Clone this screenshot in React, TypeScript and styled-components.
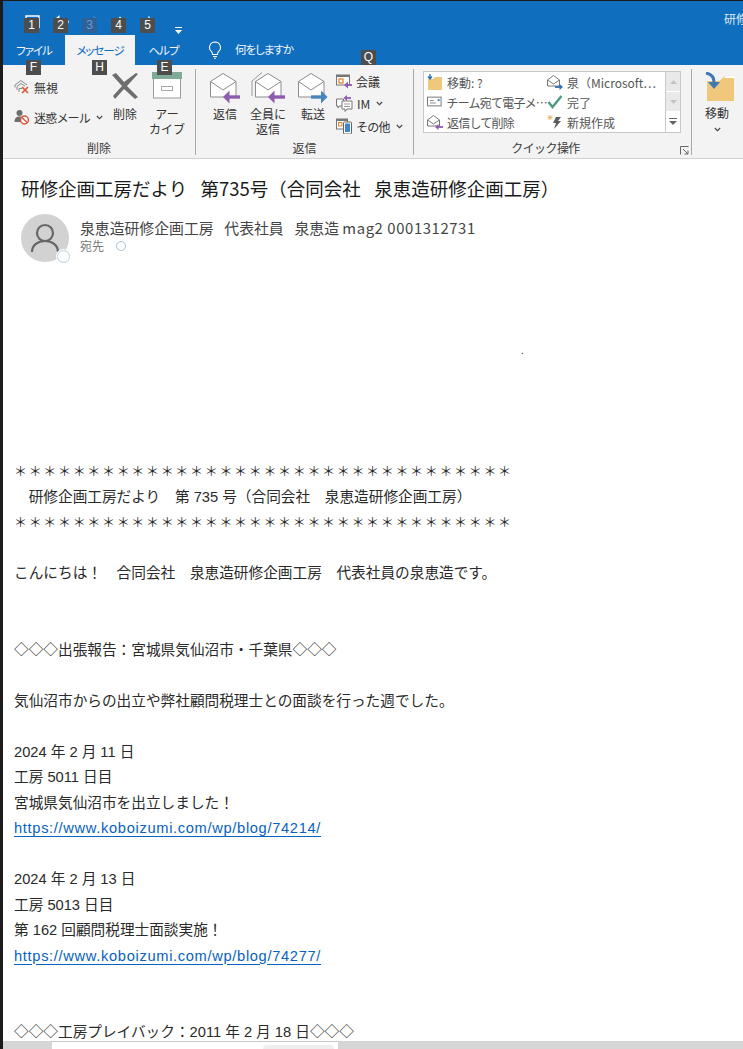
import React from 'react';
import styled, { createGlobalStyle } from 'styled-components';

const GlobalStyle = createGlobalStyle`
  html, body {
    margin: 0;
    padding: 0;
    background: #1c1c1c;
  }
  * {
    box-sizing: border-box;
  }
`;

const uiFont = `"Noto Sans CJK JP", "Noto Sans", sans-serif`;
const bodyFont = `"Liberation Sans", "Noto Sans CJK JP", sans-serif`;

const Window = styled.div`
  width: 740px;
  height: 1048px;
  margin: 1px 0 0 3px;
  display: flex;
  flex-direction: column;
  overflow: hidden;
  background: #fff;
  font-family: ${uiFont};
`;
const TitleBar = styled.div`
  height: 34px;
  flex: none;
  display: flex;
  background: #106ebe;
  padding-left: 19px;
`;
const QatItem = styled.div`
  width: 29px;
  height: 34px;
  position: relative;
  padding: 9px 0 0 3px;
`;
const KeyTip = styled.span<{ left: number; top: number; dim?: boolean }>`
  position: absolute;
  left: ${(p) => p.left}px;
  top: ${(p) => p.top}px;
  width: 15px;
  height: 15px;
  display: flex;
  align-items: center;
  justify-content: center;
  font-size: 12px;
  letter-spacing: 0;
  line-height: 15px;
  font-family: "Liberation Sans", sans-serif;
  color: ${(p) => (p.dim ? '#6f9bc9' : '#fff')};
  background: ${(p) => (p.dim ? '#2c6298' : '#4d4d4d')};
  z-index: 2;
`;
const Customize = styled.div`
  margin: 14px 0 0 8px;
  width: 7px;
`;
const WindowTitle = styled.div`
  margin-left: auto;
  width: 19px;
  padding-top: 9px;
  overflow: hidden;
  white-space: nowrap;
  color: #dce9f5;
  font-size: 12px;
  line-height: 17px;
`;
const TabBar = styled.div`
  height: 30px;
  flex: none;
  display: flex;
  background: #106ebe;
`;
const Tab = styled.div<{ active?: boolean; w: number }>`
  position: relative;
  width: ${(p) => p.w}px;
  display: flex;
  justify-content: center;
  padding-top: 6px;
  font-size: 11.5px;
  letter-spacing: -1px;
  line-height: 18px;
  font-feature-settings: 'palt';
  color: ${(p) => (p.active ? '#106ebe' : '#f2f7fc')};
  background: ${(p) => (p.active ? '#f3f3f3' : 'transparent')};
`;
const TellMe = styled.div`
  position: relative;
  margin-left: 16px;
  display: flex;
  gap: 13px;
  padding-top: 5px;
  font-size: 11.5px;
  letter-spacing: -1px;
  line-height: 19px;
  font-feature-settings: 'palt';
  color: #f2f7fc;
`;
const Ribbon = styled.div`
  height: 94px;
  flex: none;
  display: flex;
  padding: 4px 0 3px;
  background: #f3f3f3;
  border-bottom: 1px solid #d2d2d2;
`;
const Group = styled.div<{ w: number }>`
  position: relative;
  width: ${(p) => p.w}px;
  flex: none;
  display: flex;
  flex-direction: column;
  border-right: 1px solid #a9a9a9;
  &:last-child {
    border-right: none;
  }
`;
const GroupBody = styled.div<{ pad?: number }>`
  height: 72px;
  flex: none;
  display: flex;
  padding-left: ${(p) => p.pad ?? 0}px;
`;
const GroupLabel = styled.div<{ shift?: number; tight?: boolean }>`
  height: 13px;
  text-align: center;
  font-size: 12px;
  letter-spacing: ${(p) => (p.tight ? '-0.6px' : '0')};
  line-height: 13px;
  color: #3b3b3b;
  padding-right: ${(p) => p.shift ?? 0}px;
`;
const SmallColumn = styled.div<{ w: number; top: number; gap: number; rowH: number }>`
  width: ${(p) => p.w}px;
  flex: none;
  display: grid;
  grid-auto-rows: ${(p) => p.rowH}px;
  row-gap: ${(p) => p.gap}px;
  align-content: start;
  padding-top: ${(p) => p.top}px;
`;
const SmallButton = styled.div`
  display: flex;
  align-items: center;
  gap: 4px;
  font-size: 12px;
  color: #333;
  white-space: nowrap;
`;
const Kana = styled.span`
  letter-spacing: -0.8px;
`;
const Chevron = styled.span`
  display: inline-flex;
  margin-left: 2px;
`;
const LargeButton = styled.div<{ w: number; after?: number }>`
  width: ${(p) => p.w}px;
  flex: none;
  margin-right: ${(p) => p.after ?? 0}px;
  display: flex;
  flex-direction: column;
  align-items: center;
  font-size: 12px;
  line-height: 15px;
  color: #333;
  text-align: center;
  white-space: nowrap;
`;
const LargeIcon = styled.div`
  height: 35px;
  margin-bottom: 2px;
  padding-top: 3px;
`;
const Gallery = styled.div`
  margin: 2px 0 0 9px;
  width: 258px;
  height: 62px;
  display: flex;
  background: #fff;
  border: 1px solid #c8c8c8;
`;
const GalleryGrid = styled.div`
  flex: 1;
  display: grid;
  grid-template-columns: 120px 1fr;
  grid-auto-rows: 20px;
  padding: 0 0 0 3px;
`;
const GalleryItem = styled.div`
  display: flex;
  align-items: center;
  gap: 4px;
  font-size: 12px;
  color: #555;
  white-space: nowrap;
  overflow: hidden;
`;
const GalleryScroll = styled.div`
  width: 15px;
  flex: none;
  display: flex;
  flex-direction: column;
  border-left: 1px solid #c8c8c8;
`;
const ScrollCell = styled.div<{ white?: boolean }>`
  flex: 1;
  display: flex;
  align-items: center;
  justify-content: center;
  background: ${(p) => (p.white ? '#fff' : '#e9e9e9')};
  border-bottom: 1px solid #fff;
`;
const Launcher = styled.div`
  position: absolute;
  right: 2px;
  bottom: 0;
  width: 9px;
  height: 9px;
  display: flex;
`;
const MoveLabel = styled.div`
  font-size: 12px;
  line-height: 14px;
  margin-bottom: 7px;
  color: #333;
`;
const MailHeader = styled.div`
  flex: none;
  height: 116px;
  padding: 16px 0 0 18px;
`;
const Subject = styled.div`
  font-size: 18.5px;
  line-height: 26px;
  color: #1a1a1a;
  white-space: pre;
`;
const SenderRow = styled.div`
  display: flex;
  gap: 11px;
  margin-top: 13px;
`;
const Avatar = styled.div`
  position: relative;
  width: 48px;
  height: 48px;
  border-radius: 50%;
  background: #d2d2d2;
  display: flex;
  align-items: center;
  justify-content: center;
`;
const Presence = styled.span`
  position: absolute;
  right: -1px;
  bottom: -1px;
  width: 13px;
  height: 13px;
  border-radius: 50%;
  background: #fff;
  border: 1.5px solid #bcd0dc;
  box-shadow: 0 0 0 1px #fff;
`;
const SenderName = styled.div`
  font-size: 14.85px;
  line-height: 18px;
  margin-top: 5px;
  color: #444;
  white-space: pre;
`;
const Digits = styled.span`
  letter-spacing: 0.6px;
`;
const ToLine = styled.div`
  display: flex;
  align-items: center;
  gap: 12px;
  font-size: 12px;
  line-height: 17px;
  color: #777;
`;
const ToPresence = styled.span`
  width: 10px;
  height: 10px;
  border-radius: 50%;
  border: 1.5px solid #a9c4d6;
`;
const MailBody = styled.div`
  flex: 1;
  min-height: 0;
  overflow: hidden;
  padding-left: 11px;
  font-family: ${bodyFont};
  font-size: 14.67px;
  line-height: 25.5px;
  color: #2a2a2a;
`;
const Preheader = styled.div`
  height: 184px;
  padding: 69px 0 0 507px;
  font-size: 10px;
  line-height: 14px;
`;
const Line = styled.div`
  min-height: 25.5px;
  white-space: pre;
`;
const StarLine = styled.div`
  height: 25.5px;
  font-size: 13px;
  letter-spacing: 1.67px;
  white-space: pre;
`;
const Link = styled.a`
  color: #0563c1;
  letter-spacing: 0.67px;
  text-decoration: underline;
  text-underline-offset: 3px;
`;
const BottomBar = styled.div`
  height: 8px;
  flex: none;
  display: flex;
  background: #d6d6d6;
  padding-left: 49px;
`;
const BottomPanel = styled.div`
  width: 286px;
  background: #fff;
  border-top: 1px solid #c8c8c8;
  display: flex;
  justify-content: flex-end;
  padding: 3px 4px 0 0;
`;
const BottomHandle = styled.div`
  width: 71px;
  background: #eee;
  border-radius: 4px 4px 0 0;
`;

const ChevronDown = () => (
  <svg width="7" height="5" viewBox="0 0 7 5">
    <path d="M.8 1l2.7 2.7L6.2 1" fill="none" stroke="#444" strokeWidth="1.1" />
  </svg>
);

const Arrow = ({ color, right }: { color: string; right?: boolean }) =>
  right ? (
    <>
      <path d="M13 25h11" stroke={color} strokeWidth="3.4" />
      <path d="M23 18.5l6.5 6.5-6.5 6.5z" fill={color} />
    </>
  ) : (
    <>
      <path d="M18 25h12" stroke={color} strokeWidth="3.4" />
      <path d="M19.5 18.5L13 25l6.5 6.5z" fill={color} />
    </>
  );

const EnvelopeLarge = ({ color, right, all }: { color: string; right?: boolean; all?: boolean }) => (
  <svg width={all ? 34 : 30} height="32" viewBox={all ? '-4 0 34 32' : '0 0 30 32'}>
    {all && <path d="M-3 24V9L7 .5" fill="none" stroke="#9a9a9a" />}
    <path d="M.5 9.5L13 1.5l13 8V25H.5z" fill="#fff" stroke="#8c8c8c" />
    <path d="M.5 9.5L13 18l13-8.5" fill="none" stroke="#8c8c8c" />
    <Arrow color={color} right={right} />
  </svg>
);

const IgnoreIcon = () => (
  <svg width="16" height="16" viewBox="0 0 16 16">
    <path d="M1 8.5V6l6-4.5L13 6" fill="none" stroke="#888" />
    <path d="M3 11V7.5L7 4.5l4 2.5" fill="none" stroke="#888" />
    <path d="M5 13V9.500h3" fill="none" stroke="#888" />
    <path d="M8 8l6 6m0-6l-6 6" stroke="#d9583b" strokeWidth="1.7" />
  </svg>
);
const JunkIcon = () => (
  <svg width="16" height="16" viewBox="0 0 16 16">
    <circle cx="5.500" cy="4" r="3" fill="#6e6e6e" />
    <path d="M.5 13c0-4 2-5.500 5-5.500 2 0 3 .5 3.500 1.500L7 13z" fill="#6e6e6e" />
    <circle cx="10.500" cy="11" r="3.900" fill="#fff" stroke="#d9583b" strokeWidth="1.500" />
    <path d="M8 8.500l5 5" stroke="#d9583b" strokeWidth="1.500" />
  </svg>
);
const MeetingIcon = () => (
  <svg width="16" height="16" viewBox="0 0 16 16">
    <rect x=".5" y="2" width="13" height="10" fill="#fff" stroke="#777" />
    <path d="M1 2h12v2H1z" fill="#777" />
    <rect x="3" y="6" width="4" height="4" fill="#fff" stroke="#e5892e" strokeWidth="1.300" />
    <path d="M16 12H10" stroke="#8e5bb0" strokeWidth="1.800" />
    <path d="M12 8.500L8 12l4 3.500z" fill="#8e5bb0" />
  </svg>
);
const ImIcon = () => (
  <svg width="17" height="17" viewBox="0 0 17 17">
    <path d="M.5 4h7v7H3l-1 2v-2H.5z" fill="#fff" stroke="#777" />
    <path d="M6 6h10v8h-5l-2 2.500V14H6z" fill="#fff" stroke="#777" />
    <path d="M8 9h6M8 11.500h6" stroke="#999" />
    <path d="M15 3H9" stroke="#8e5bb0" strokeWidth="1.800" />
    <path d="M11 0L7.500 3 11 6z" fill="#8e5bb0" />
  </svg>
);
const MoreIcon = () => (
  <svg width="16" height="16" viewBox="0 0 16 16">
    <rect x=".5" y="1" width="11" height="10" fill="#fff" stroke="#777" />
    <path d="M1 1h10v2H1z" fill="#777" />
    <rect x="2.500" y="4.500" width="3.500" height="3.500" fill="#fff" stroke="#e5892e" />
    <rect x="7.500" y="4" width="8" height="12" rx="1" fill="#fff" stroke="#666" />
    <rect x="9" y="5.500" width="5" height="8.500" fill="#3f86c6" />
  </svg>
);
const FolderSmallIcon = () => (
  <svg width="16" height="16" viewBox="0 0 16 16">
    <path d="M1 5h5l2-2h7v13H1z" fill="#f0c87c" />
    <path d="M3 -1v5M1 2.500L3 5l2-2.500" fill="none" stroke="#2f6fb5" strokeWidth="1.400" />
  </svg>
);
const TeamMailIcon = () => (
  <svg width="16" height="16" viewBox="0 0 16 16">
    <rect x=".5" y="3" width="14" height="9" fill="#fff" stroke="#777" />
    <path d="M3 6.500h4M3 9h6" stroke="#888" />
    <rect x="11" y="5" width="2" height="2" fill="#3f86c6" />
  </svg>
);
const QuickMailIcon = ({ color, right }: { color: string; right?: boolean }) => (
  <svg width="16" height="16" viewBox="0 0 16 16">
    <path d="M.5 6L6.500 1.500l6 4.500v6H.5z" fill="#fff" stroke="#777" />
    <path d="M.5 6l6 4 6-4" fill="none" stroke="#777" />
    {right ? (
      <>
        <path d="M8 13h5" stroke={color} strokeWidth="1.800" />
        <path d="M12.500 10l3.500 3-3.500 3z" fill={color} />
      </>
    ) : (
      <>
        <path d="M11 13h5" stroke={color} strokeWidth="1.800" />
        <path d="M11.500 10L8 13l3.500 3z" fill={color} />
      </>
    )}
  </svg>
);
const CheckIcon = () => (
  <svg width="16" height="16" viewBox="0 0 16 16">
    <path d="M1.500 8l4 5L14.500 2" fill="none" stroke="#4d9a80" strokeWidth="2.400" />
  </svg>
);
const FlashIcon = () => (
  <svg width="16" height="16" viewBox="0 0 16 16">
    <path d="M3 1v5M.5 3.500h5M1 1.500l4 4m0-4l-4 4" stroke="#e8b45e" strokeWidth=".9" />
    <path d="M9 3h5l-3 4h3l-7 8 2-6H6z" fill="#5c5c5c" />
  </svg>
);

const stars = '＊'.repeat(34);
const bodyLines: (string | { href: string })[] = [
  '　研修企画工房だより　第 735 号（合同会社　泉恵造研修企画工房）',
  stars,
  '',
  'こんにちは！　合同会社　泉恵造研修企画工房　代表社員の泉恵造です。',
  '',
  '',
  '◇◇◇出張報告：宮城県気仙沼市・千葉県◇◇◇',
  '',
  '気仙沼市からの出立や弊社顧問税理士との面談を行った週でした。',
  '',
  '2024 年 2 月 11 日',
  '工房 5011 日目',
  '宮城県気仙沼市を出立しました！',
  { href: 'https://www.koboizumi.com/wp/blog/74214/' },
  '',
  '2024 年 2 月 13 日',
  '工房 5013 日目',
  '第 162 回顧問税理士面談実施！',
  { href: 'https://www.koboizumi.com/wp/blog/74277/' },
  '',
  '',
  '◇◇◇工房プレイバック：2011 年 2 月 18 日◇◇◇',
];

const App = () => (
  <>
    <GlobalStyle />
    <Window>
      <TitleBar>
        <QatItem>
          <svg width="16" height="14" viewBox="0 0 16 14">
            <path d="M1 13V1h13v12" fill="none" stroke="#fff" strokeWidth="1.400" />
          </svg>
          <KeyTip left={2} top={17}>1</KeyTip>
        </QatItem>
        <QatItem>
          <svg width="16" height="14" viewBox="0 0 16 14">
            <path d="M2 4h9c2 0 3 1.500 3 4" fill="none" stroke="#fff" strokeWidth="1.500" />
            <path d="M5.500 0L1 4l4.500 4z" fill="#fff" />
          </svg>
          <KeyTip left={2} top={17}>2</KeyTip>
        </QatItem>
        <QatItem>
          <svg width="16" height="14" viewBox="0 0 16 14">
            <path d="M13 4H7C4 4 2 6 2 9s2 5 5 5" fill="none" stroke="#3c7fc0" strokeWidth="2" />
            <path d="M10 0l4.500 4L10 8z" fill="#3c7fc0" />
          </svg>
          <KeyTip left={2} top={17} dim>3</KeyTip>
        </QatItem>
        <QatItem>
          <svg width="16" height="14" viewBox="0 0 16 14">
            <path d="M8 1.500l4 4v8H4v-8z" fill="#fff" />
          </svg>
          <KeyTip left={2} top={17}>4</KeyTip>
        </QatItem>
        <QatItem>
          <svg width="16" height="14" viewBox="0 0 16 14">
            <path d="M8 1.500v12M3 8h10" stroke="#fff" strokeWidth="1.400" />
          </svg>
          <KeyTip left={2} top={17}>5</KeyTip>
        </QatItem>
        <Customize>
          <svg width="7" height="7" viewBox="0 0 7 7">
            <path d="M0 0h7v1H0zM0 3h7L3.500 7z" fill="#fff" />
          </svg>
        </Customize>
        <WindowTitle>研修企画工房</WindowTitle>
      </TitleBar>
      <TabBar>
        <Tab w={62}>
          ファイル
          <KeyTip left={23} top={25}>F</KeyTip>
        </Tab>
        <Tab w={70} active>
          メッセージ
          <KeyTip left={27} top={25}>H</KeyTip>
        </Tab>
        <Tab w={57}>
          ヘルプ
          <KeyTip left={22} top={25}>E</KeyTip>
        </Tab>
        <TellMe>
          <svg width="14" height="18" viewBox="0 0 14 18" style={{ marginTop: 1 }}>
            <path
              d="M7 1a5.500 5.500 0 0 0-3.500 9.700c.8.800 1 1.500 1 2.800h5c0-1.300.2-2 1-2.800A5.500 5.500 0 0 0 7 1zM5 15.500h4M6 17.300h2"
              fill="none"
              stroke="#fff"
              strokeWidth="1.100"
            />
          </svg>
          何をしますか
          <KeyTip left={153} top={15}>Q</KeyTip>
        </TellMe>
      </TabBar>
      <Ribbon>
        <Group w={193}>
          <GroupBody pad={11}>
            <SmallColumn w={94} top={7} gap={8} rowH={22}>
              <SmallButton>
                <IgnoreIcon />
                無視
              </SmallButton>
              <SmallButton>
                <JunkIcon />
                <Kana>迷惑メール</Kana>
                <Chevron>
                  <ChevronDown />
                </Chevron>
              </SmallButton>
            </SmallColumn>
            <LargeButton w={34} after={8}>
              <LargeIcon>
                <svg width="30" height="28" viewBox="0 0 30 28">
                  <path
                    d="M2 3l4-2 8 9L26 1l2 1-11 12 11 11-3 2-11-10-9 10-2-3 9-10z"
                    fill="#6e6e6e"
                  />
                </svg>
              </LargeIcon>
              削除
            </LargeButton>
            <LargeButton w={34}>
              <LargeIcon>
                <svg width="30" height="27" viewBox="0 0 30 27">
                  <rect x="1.500" y="6" width="27" height="20" fill="#fff" stroke="#9a9a9a" />
                  <rect width="30" height="7" fill="#7eab97" />
                  <rect x="9.500" y="14.500" width="11" height="4" fill="#fff" stroke="#aaa" />
                </svg>
              </LargeIcon>
              アー
              <br />
              カイブ
            </LargeButton>
          </GroupBody>
          <GroupLabel>削除</GroupLabel>
        </Group>
        <Group w={218}>
          <GroupBody pad={14}>
            <LargeButton w={30} after={11}>
              <LargeIcon>
                <EnvelopeLarge color="#8e5bb0" />
              </LargeIcon>
              返信
            </LargeButton>
            <LargeButton w={34} after={11}>
              <LargeIcon>
                <EnvelopeLarge color="#8e5bb0" all />
              </LargeIcon>
              全員に
              <br />
              返信
            </LargeButton>
            <LargeButton w={34} after={6}>
              <LargeIcon>
                <EnvelopeLarge color="#4a84bd" right />
              </LargeIcon>
              転送
            </LargeButton>
            <SmallColumn w={70} top={1} gap={0} rowH={22.500}>
              <SmallButton>
                <MeetingIcon />
                会議
              </SmallButton>
              <SmallButton>
                <ImIcon />
                IM
                <Chevron>
                  <ChevronDown />
                </Chevron>
              </SmallButton>
              <SmallButton>
                <MoreIcon />
                <Kana>その他</Kana>
                <Chevron>
                  <ChevronDown />
                </Chevron>
              </SmallButton>
            </SmallColumn>
          </GroupBody>
          <GroupLabel>返信</GroupLabel>
        </Group>
        <Group w={278}>
          <GroupBody>
            <Gallery>
              <GalleryGrid>
                <GalleryItem>
                  <FolderSmallIcon />
                  移動: ?
                </GalleryItem>
                <GalleryItem>
                  <QuickMailIcon color="#2f6fb5" right />
                  泉（Microsoft…
                </GalleryItem>
                <GalleryItem>
                  <TeamMailIcon />
                  <Kana>チーム宛て電子メ…</Kana>
                </GalleryItem>
                <GalleryItem>
                  <CheckIcon />
                  完了
                </GalleryItem>
                <GalleryItem>
                  <QuickMailIcon color="#8e5bb0" />
                  <Kana>返信して削除</Kana>
                </GalleryItem>
                <GalleryItem>
                  <FlashIcon />
                  新規作成
                </GalleryItem>
              </GalleryGrid>
              <GalleryScroll>
                <ScrollCell>
                  <svg width="7" height="4" viewBox="0 0 7 4">
                    <path d="M3.500 0L7 4H0z" fill="#c4c4c4" />
                  </svg>
                </ScrollCell>
                <ScrollCell>
                  <svg width="7" height="4" viewBox="0 0 7 4">
                    <path d="M3.500 4L7 0H0z" fill="#c4c4c4" />
                  </svg>
                </ScrollCell>
                <ScrollCell white>
                  <svg width="8" height="7" viewBox="0 0 8 7">
                    <path d="M0 0h8v1H0zM0 3h8L4 7z" fill="#666" />
                  </svg>
                </ScrollCell>
              </GalleryScroll>
            </Gallery>
          </GroupBody>
          <GroupLabel shift={14} tight>クイック操作</GroupLabel>
          <Launcher>
            <svg width="9" height="9" viewBox="0 0 9 9">
              <path d="M.5 8.500v-8h8M3 3l5 5M8 4.500V8H4.500" fill="none" stroke="#666" />
            </svg>
          </Launcher>
        </Group>
        <Group w={50}>
          <GroupBody>
            <LargeButton w={50}>
              <LargeIcon>
                <svg width="32" height="30" viewBox="0 0 32 30" style={{ marginLeft: 6 }}>
                  <path d="M3 9h12l6-5h9v25H3z" fill="#f0c87c" />
                  <path d="M22 4h8v2h-10z" fill="#fff" />
                  <path d="M2 1c5 1 8 4 8 9" fill="none" stroke="#3f78b5" strokeWidth="3" />
                  <path d="M4 10l6 7 6-7z" fill="#3f78b5" />
                </svg>
              </LargeIcon>
              <MoveLabel>移動</MoveLabel>
              <ChevronDown />
            </LargeButton>
          </GroupBody>
        </Group>
      </Ribbon>
      <MailHeader>
        <Subject>{'研修企画工房だより\u2002 第735号（合同会社\u2002 泉恵造研修企画工房）'}</Subject>
        <SenderRow>
          <Avatar>
            <svg width="30" height="32" viewBox="0 0 30 32">
              <circle cx="15" cy="11" r="8" fill="none" stroke="#666" strokeWidth="2.200" />
              <path d="M2 30c0-7 6-11 13-11s13 4 13 11" fill="none" stroke="#666" strokeWidth="2.200" />
            </svg>
            <Presence />
          </Avatar>
          <div>
            <SenderName>
              {'泉恵造研修企画工房\u2002 代表社員\u2002 泉恵造 '}
              <Digits>mag2 0001312731</Digits>
            </SenderName>
            <ToLine>
              宛先
              <ToPresence />
            </ToLine>
          </div>
        </SenderRow>
      </MailHeader>
      <MailBody>
        <Preheader>.</Preheader>
        <StarLine>{stars}</StarLine>
        {bodyLines.map((line, i) =>
          line === stars ? (
            <StarLine key={i}>{stars}</StarLine>
          ) : (
            <Line key={i}>
              {typeof line === 'string' ? line : <Link href={line.href}>{line.href}</Link>}
            </Line>
          )
        )}
      </MailBody>
      <BottomBar>
        <BottomPanel>
          <BottomHandle />
        </BottomPanel>
      </BottomBar>
    </Window>
  </>
);

export default App;
